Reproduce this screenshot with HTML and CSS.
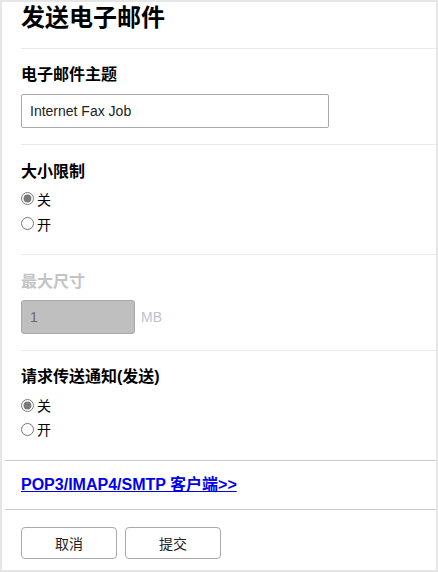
FILE: index.html
```html
<!DOCTYPE html>
<html lang="zh-CN">
<head>
<meta charset="utf-8">
<title>发送电子邮件</title>
<link rel="stylesheet" href="styles.css">
</head>
<body>
<div class="panel">
  <div class="main">
    <h1 class="title">发送电子邮件</h1>
    <div class="section s1">
      <div class="label">电子邮件主题</div>
      <input class="text-input" type="text" value="Internet Fax Job">
    </div>
    <div class="section s2">
      <div class="label">大小限制</div>
      <label class="radio-row"><input type="radio" name="size" checked><span>关</span></label>
      <label class="radio-row"><input type="radio" name="size"><span>开</span></label>
    </div>
    <div class="section s3">
      <div class="label disabled-label">最大尺寸</div>
      <div class="size-row">
        <input class="text-input small" type="text" value="1" disabled>
        <span class="unit">MB</span>
      </div>
    </div>
    <div class="section s4 last">
      <div class="label">请求传送通知(发送)</div>
      <label class="radio-row r2"><input type="radio" name="notify" checked><span>关</span></label>
      <label class="radio-row r2"><input type="radio" name="notify"><span>开</span></label>
    </div>
  </div>
  <div class="link-section">
    <a class="link" href="#">POP3/IMAP4/SMTP 客户端&gt;&gt;</a>
  </div>
  <div class="buttons">
    <button class="btn" type="button">取消</button>
    <button class="btn" type="button">提交</button>
  </div>
</div>
</body>
</html>
```
FILE: styles.css
```css
html, body {
  margin: 0;
  padding: 0;
}
body {
  background: #e6e6e6;
  font-family: "Liberation Sans", "Noto Sans CJK SC", sans-serif;
  color: #111;
  width: 438px;
  height: 572px;
  overflow: hidden;
}
.panel {
  margin: 2px 2px 0 2px;
  width: 434px;
  height: 568px;
  background: #fff;
}
.main {
  padding-left: 19px;
}
.title {
  margin: 0;
  padding-top: 1px;
  font-size: 24px;
  line-height: 30px;
  font-weight: bold;
  padding-bottom: 15px;
  border-bottom: 1px solid #ebebeb;
  color: #000;
}
.section {
  border-bottom: 1px solid #ebebeb;
}
.section.last {
  border-bottom: none;
}
.label {
  font-size: 16px;
  line-height: 20px;
  font-weight: bold;
  color: #000;
}
.disabled-label {
  color: #c4c4c4;
}
.s1 {
  padding-top: 16px;
  padding-bottom: 16px;
}
.s1 .label {
  margin-bottom: 9px;
}
.text-input {
  display: block;
  box-sizing: border-box;
  width: 308px;
  height: 34px;
  margin: 0;
  padding: 0 8px;
  border: 1px solid #a9a9a9;
  border-radius: 2px;
  font-family: "Liberation Sans", "Noto Sans CJK SC", sans-serif;
  font-size: 14px;
  color: #222;
  background: #fff;
  outline: none;
}
.s2 {
  padding-top: 17px;
  padding-bottom: 18px;
}
.s2 .label {
  margin-bottom: 4px;
}
.radio-row {
  display: flex;
  align-items: center;
  gap: 3px;
  height: 25px;
  font-size: 14px;
  color: #000;
}
.radio-row.r2 {
  height: 24px;
}
.radio-row input {
  margin: 0;
  width: 13px;
  height: 13px;
  accent-color: #7a7a7a;
}
.s3 {
  padding-top: 17px;
  padding-bottom: 16px;
}
.s3 .label {
  margin-bottom: 8px;
}
.size-row {
  display: flex;
  align-items: center;
  gap: 6px;
}
.text-input.small {
  width: 114px;
  background: #bfbfbf;
  border-color: #a8a8a8;
  border-radius: 3px;
  color: #6a6a6a;
}
.unit {
  font-size: 14px;
  color: #bcc3cf;
}
.s4 {
  padding-top: 16px;
  padding-bottom: 19px;
}
.s4 .label {
  margin-bottom: 6px;
}
.link-section {
  margin-left: 3px;
  padding-left: 16px;
  border-top: 1px solid #cccccc;
  padding-top: 14px;
  padding-bottom: 14px;
  line-height: 20px;
}
.link {
  font-size: 16px;
  font-weight: bold;
  color: #0000ee;
  text-decoration: underline;
}
.buttons {
  margin-left: 3px;
  padding-left: 16px;
  border-top: 1px solid #cccccc;
  padding-top: 17px;
  display: flex;
  gap: 8px;
}
.btn {
  box-sizing: border-box;
  width: 96px;
  height: 32px;
  margin: 0;
  background: #fff;
  border: 1px solid #a9a9a9;
  border-radius: 4px;
  font-family: "Liberation Sans", "Noto Sans CJK SC", sans-serif;
  font-size: 14px;
  color: #222;
}
```
